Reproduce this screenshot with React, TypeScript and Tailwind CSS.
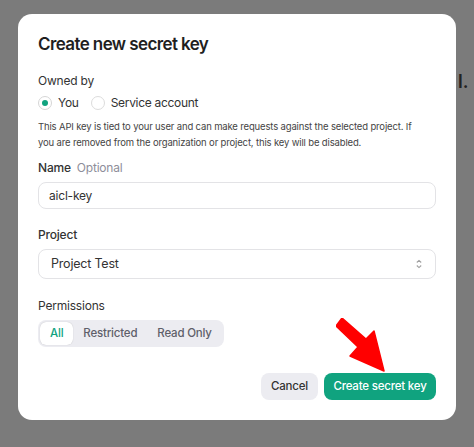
export default function App() {
  return (
    <div
      className="w-[474px] h-[447px] bg-[#7b7b7b] pt-[14px] pl-[18px] overflow-hidden relative"
      style={{ fontFamily: 'Inter, "Noto Sans", sans-serif' }}
    >
      <span className="absolute left-[458px] top-[68px] text-[18px] font-semibold text-[#222]">l.</span>
      <div className="w-[438px] h-[406px] bg-white rounded-[14px] px-5 pt-[19px] relative">
        <h2 className="text-[17px] leading-[22px] font-semibold text-[#1f1f1f] tracking-[-0.6px]">
          Create new secret key
        </h2>

        <div className="mt-[17px] text-[12px] leading-[18px] text-[#333] tracking-[-0.2px]">Owned by</div>
        <div className="mt-[4px] flex items-center text-[12px] text-[#333] leading-[18px] tracking-[-0.3px]">
          <span className="w-[14px] h-[14px] rounded-full border border-[#d6d6d6] flex items-center justify-center">
            <span className="w-[6px] h-[6px] rounded-full bg-[#10a37f]" />
          </span>
          <span className="ml-[6px]">You</span>
          <span className="ml-[12px] w-[14px] h-[14px] rounded-full border border-[#dcdcdc]" />
          <span className="ml-[6px]">Service account</span>
        </div>
        <p className="mt-[7px] pr-[12px] text-[9.5px] leading-[16px] text-[#444] tracking-[-0.15px]">
          This API key is tied to your user and can make requests against the selected project. If you are removed from the organization or project, this key will be disabled.
        </p>

        <div className="mt-[8px] text-[12px] leading-[18px] text-[#333] font-medium tracking-[-0.2px]">
          Name <span className="ml-[3px] font-normal text-[#8e8e9a]">Optional</span>
        </div>
        <div className="mt-[5px] h-[27px] rounded-[8px] border border-[#e3e3e6] flex items-center px-[10px] text-[12px] text-[#333] tracking-[-0.2px]">
          aicl-key
        </div>

        <div className="mt-[17px] text-[12px] leading-[18px] text-[#333] font-medium tracking-[-0.2px]">Project</div>
        <div className="mt-[5px] h-[30px] rounded-[8px] border border-[#e3e3e6] flex items-center justify-between pl-[12px] pr-[12px] text-[12.5px] text-[#333] tracking-[-0.2px]">
          <span>Project Test</span>
          <svg width="8" height="10" viewBox="0 0 8 10" fill="none" stroke="#a0a0a0" strokeWidth="1.1">
            <path d="M1.8 3.5 L4 1.4 L6.2 3.5" />
            <path d="M1.8 6.5 L4 8.6 L6.2 6.5" />
          </svg>
        </div>

        <div className="mt-[18px] text-[12px] leading-[18px] text-[#333] tracking-[-0.2px]">Permissions</div>
        <div className="mt-[5px] inline-flex items-center h-[27px] rounded-[8px] bg-[#ececf1] p-[2px] text-[11.5px] font-medium tracking-[-0.2px]">
          <span className="h-full px-[10px] flex items-center rounded-[6px] bg-white text-[#10a37f] shadow-[0_0_1px_rgba(0,0,0,0.25)]">All</span>
          <span className="px-[10px] text-[#5f5f6a]">Restricted</span>
          <span className="px-[10px] text-[#5f5f6a]">Read Only</span>
        </div>

        <div className="absolute right-5 top-[359px] flex items-center gap-[6px] text-[11.5px] font-medium tracking-[-0.2px]">
          <button className="h-[27px] w-[57px] rounded-[8px] bg-[#ececf1] text-[#333]">Cancel</button>
          <button className="h-[27px] w-[112px] rounded-[8px] bg-[#10a37f] text-white">Create secret key</button>
        </div>

        <svg className="absolute left-[318px] top-[304px]" width="52" height="56" viewBox="0 0 52 56">
          <path
            d="M6 0 L30 21 L38 13 L48 53 L14 38 L22 29 L0 8 Z"
            fill="#ff0000"
            stroke="#ff0000"
            strokeWidth="1.5"
            strokeLinejoin="round"
          />
        </svg>
      </div>
    </div>
  );
}
